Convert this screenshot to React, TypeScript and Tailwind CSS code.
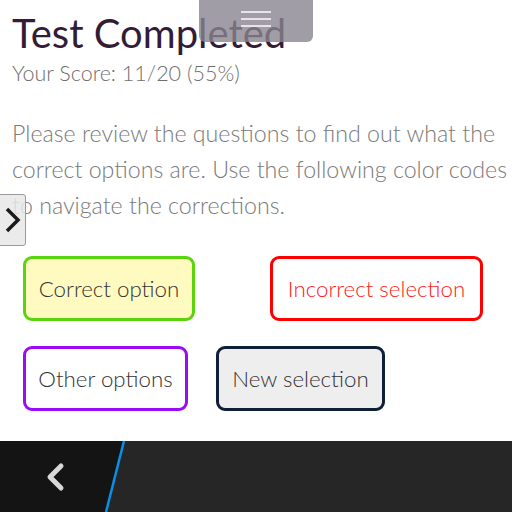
import React from "react";

export default function App() {
  return (
    <div className="relative w-[512px] h-[512px] bg-white overflow-hidden flex flex-col" style={{ fontFamily: "Lato, 'Open Sans', sans-serif" }}>
      <div className="flex-1 flex flex-col px-3 pt-[9px]">
        <h1 className="text-[40px] leading-[48px] text-[#321c36] font-normal">Test Completed</h1>
        <div className="text-[21.5px] leading-[26px] text-[#6f6f6f] font-light mt-[3px]">Your Score: 11/20 (55%)</div>
        <p className="text-[23.2px] leading-[36px] text-[#7a7a7a] font-light mt-[29px] mr-[-12px]">
          Please review the questions to find out what the correct options are. Use the following color codes to navigate the corrections.
        </p>
        <div className="flex flex-col gap-[25px] mt-[33px] pl-[11px]">
          <div className="flex justify-between pr-[17px]">
            <div className="w-[172px] h-[65px] rounded-[9px] border-[3px] border-[#5ad40d] bg-[#fffac0] flex items-center justify-center text-[22.3px] font-light text-[#333]">Correct option</div>
            <div className="w-[213px] h-[65px] rounded-[9px] border-[3px] border-[#ff0000] bg-white flex items-center justify-center text-[22.3px] font-light text-[#ff1a1a]">Incorrect selection</div>
          </div>
          <div className="flex gap-[28px]">
            <div className="w-[165px] h-[65px] rounded-[9px] border-[3px] border-[#9a0cf5] bg-white flex items-center justify-center text-[22.3px] font-light text-[#333]">Other options</div>
            <div className="w-[169px] h-[65px] rounded-[9px] border-[3px] border-[#0e1f36] bg-[#eeeeee] flex items-center justify-center text-[22.3px] font-light text-[#333]">New selection</div>
          </div>
        </div>
      </div>

      <div className="relative h-[71px] bg-[#262626] flex items-center">
        <svg className="absolute left-0 top-0" width="130" height="71" viewBox="0 0 130 71">
          <polygon points="0,0 124,0 106,71 0,71" fill="#141414" />
          <line x1="124" y1="0" x2="106" y2="71" stroke="#0a8ee8" strokeWidth="2.5" />
          <polyline points="61,25 50,36 61,47" fill="none" stroke="#d8d8d8" strokeWidth="5" strokeLinecap="round" strokeLinejoin="round" />
        </svg>
      </div>

      <div className="absolute left-[199px] top-0 w-[114px] h-[42px] rounded-b-[6px] bg-[#8a8590]/80 flex flex-col items-center justify-center gap-[5px] pb-[4px]">
        <div className="w-[30px] h-[2px] bg-[#e6e4e8]" />
        <div className="w-[30px] h-[2px] bg-[#e6e4e8]" />
        <div className="w-[30px] h-[2px] bg-[#e6e4e8]" />
      </div>

      <div className="absolute left-[-2px] top-[194px] w-[28px] h-[52px] rounded-r-[3px] border border-[#9a9a9a] bg-[#e8e8e8]/85 flex items-center justify-center">
        <svg width="18" height="32" viewBox="0 0 18 32">
          <polyline points="4,5 15,16 4,27" fill="none" stroke="#1a1a1a" strokeWidth="3.5" />
        </svg>
      </div>
    </div>
  );
}
